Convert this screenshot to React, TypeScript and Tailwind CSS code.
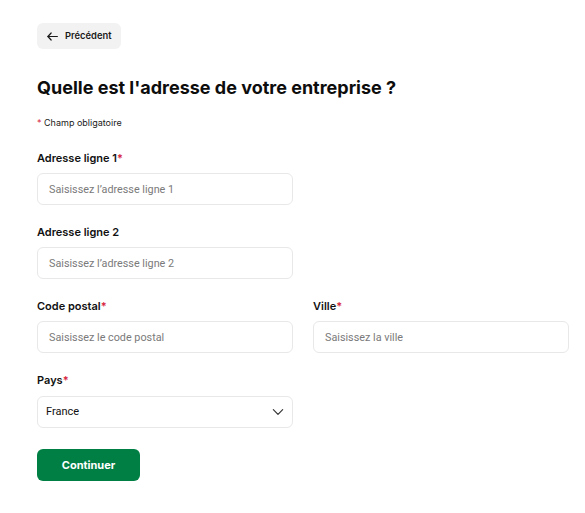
import React from "react";

function Req() {
  return <span className="text-[#d7263d]">*</span>;
}

function Field({ label, required, placeholder }: { label: string; required?: boolean; placeholder: string }) {
  return (
    <div className="flex flex-col">
      <label className="text-[11px] leading-[16px] font-semibold text-[#111]">
        {label}
        {required && <Req />}
      </label>
      <input
        className="mt-[7px] h-[32px] w-[256px] rounded-[6px] border border-[#e8e8e8] bg-white px-[11px] font-['Roboto',sans-serif] text-[10.8px] text-[#222] placeholder:text-[#7a7a7a] outline-none"
        placeholder={placeholder}
      />
    </div>
  );
}

export default function App() {
  return (
    <div className="min-h-[513px] bg-white pl-[37px] pt-[23px] text-[#111]" style={{ fontFamily: "Inter, 'Noto Sans', sans-serif" }}>
      <button className="flex h-[26px] items-center gap-[6px] rounded-[6px] bg-[#f2f2f2] pl-[9px] pr-[9px] text-[9.4px] font-semibold text-[#1a1a1a]">
        <svg width="13" height="13" viewBox="0 0 24 24" fill="none" stroke="#1a1a1a" strokeWidth="2.2" strokeLinecap="round" strokeLinejoin="round">
          <path d="M21 12H3.5" />
          <path d="M9.5 5.5L3.5 12l6 6.5" />
        </svg>
        Précédent
      </button>

      <h1 className="mt-[27px] text-[18px] leading-[24px] font-bold text-[#0d0d0d]">
        Quelle est l'adresse de votre entreprise ?
      </h1>

      <p className="mt-[17px] text-[9px] leading-[12px] text-[#1a1a1a]">
        <Req /> Champ obligatoire
      </p>

      <div className="mt-[21px] flex flex-col gap-[19px]">
        <Field label="Adresse ligne 1" required placeholder="Saisissez l’adresse ligne 1" />
        <Field label="Adresse ligne 2" placeholder="Saisissez l’adresse ligne 2" />
        <div className="flex gap-[20px]">
          <Field label="Code postal" required placeholder="Saisissez le code postal" />
          <Field label="Ville" required placeholder="Saisissez la ville" />
        </div>
        <div className="flex flex-col">
          <label className="text-[11px] leading-[16px] font-semibold text-[#111]">
            Pays
            <Req />
          </label>
          <div className="mt-[8px] flex h-[32px] w-[256px] items-center justify-between rounded-[6px] border border-[#e8e8e8] bg-white pl-[8px] pr-[7px]">
            <span className="font-['Roboto',sans-serif] text-[11px] text-[#111]">France</span>
            <svg width="14" height="14" viewBox="0 0 24 24" fill="none" stroke="#333" strokeWidth="2" strokeLinecap="round" strokeLinejoin="round">
              <path d="M4 8l8 8 8-8" />
            </svg>
          </div>
        </div>
      </div>

      <button className="mt-[21px] flex h-[32px] w-[103px] items-center justify-center rounded-[6px] bg-[#007f45] text-[11px] font-bold text-white">
        Continuer
      </button>
    </div>
  );
}
